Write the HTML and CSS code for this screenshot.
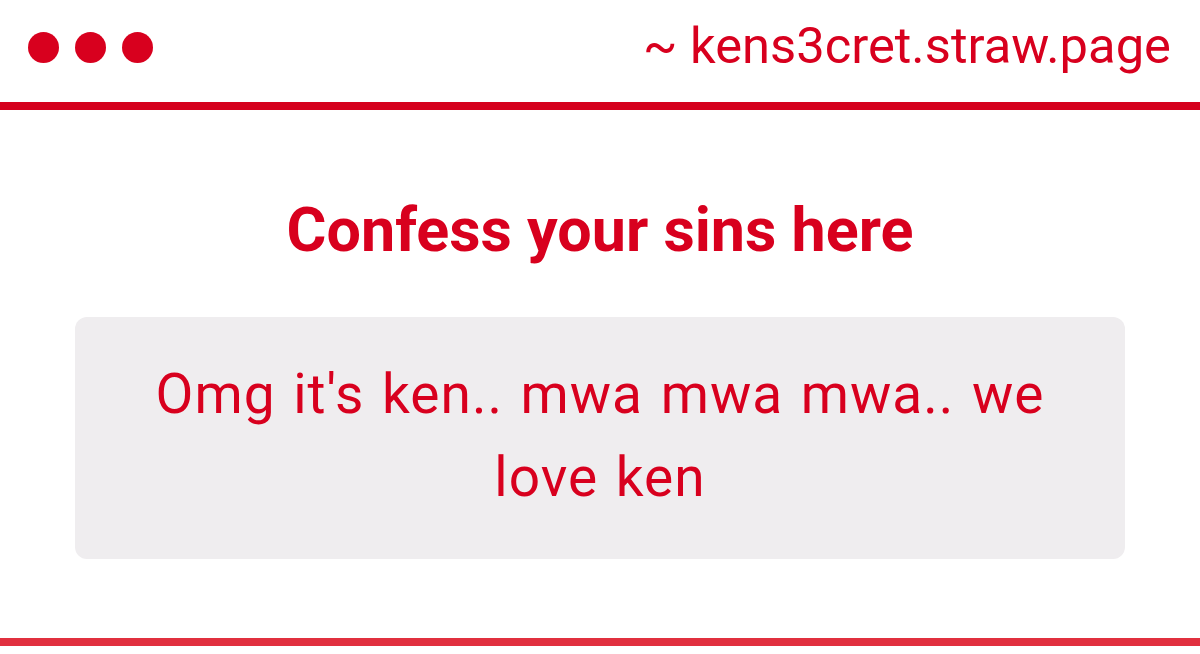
FILE: index.html
```html
<!DOCTYPE html>
<html lang="en">
<head>
    <meta charset="UTF-8">
    <meta name="viewport" content="width=device-width, initial-scale=1.0">
    <title>kens3cret.straw.page</title>
    <link rel="stylesheet" href="styles.css">
</head>
<body>

<header class="topbar">
    <div class="dots">
        <span class="dot"></span>
        <span class="dot"></span>
        <span class="dot"></span>
    </div>
    <div class="url">~ kens3cret.straw.page</div>
</header>
<div class="rule"></div>

<main class="page">
    <h1 class="title">Confess your sins here</h1>
    <div class="message">Omg it′s ken.. mwa mwa mwa.. we love ken</div>
</main>

<div class="rule rule-bottom"></div>

</body>
</html>
```

FILE: styles.css
```css
body {
    margin: 0;
    padding: 0;
    font-family: 'Roboto', 'Liberation Sans', sans-serif;
    background-color: #fff;
    color: #d8001e;
}

.topbar {
    height: 102px;
    box-sizing: border-box;
    padding: 0 29px 8px 28px;
    display: flex;
    align-items: center;
    justify-content: space-between;
}

.dots {
    display: flex;
    gap: 16px;
}

.dot {
    width: 31px;
    height: 31px;
    border-radius: 50%;
    background-color: #d8001e;
}

.url {
    font-size: 50.7px;
    line-height: 60px;
    margin-top: -2px;
}

.rule {
    height: 8px;
    background-color: #d5001d;
}

.page {
    padding: 84px 0 79px;
}

.title {
    margin: 0 0 51px;
    text-align: center;
    font-size: 61px;
    line-height: 72px;
    font-weight: 700;
}

.message {
    margin: 0 75px;
    padding: 36px 40px 40px;
    background-color: #efedef;
    border-radius: 12px;
    text-align: center;
    font-size: 55px;
    line-height: 83px;
    letter-spacing: 1px;
    word-spacing: 3px;
}

.rule-bottom {
    background-color: #e1303f;
}
```
